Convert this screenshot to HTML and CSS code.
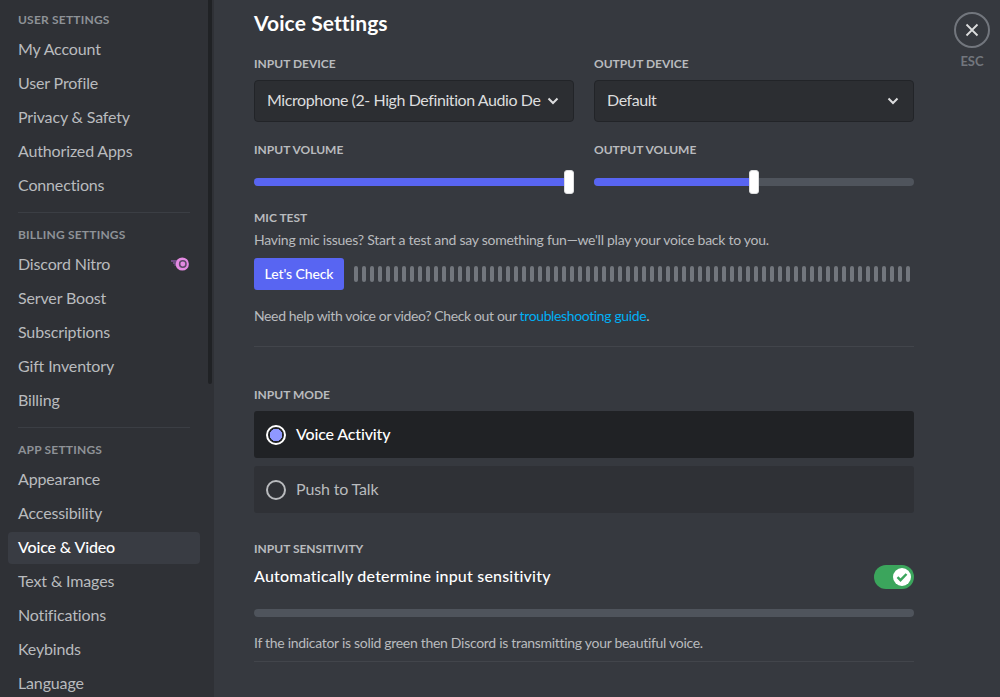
FILE: index.html
```html
<!DOCTYPE html>
<html lang="en">
<head>
    <meta charset="UTF-8">
    <title>Voice Settings</title>
    <link rel="stylesheet" href="styles.css">
</head>
<body>
<!--sidebar-->
<div class="sidebar">
    <div class="thumb"></div>
    <div class="navHead">User Settings</div>
    <div class="navItem">My Account</div>
    <div class="navItem">User Profile</div>
    <div class="navItem">Privacy &amp; Safety</div>
    <div class="navItem">Authorized Apps</div>
    <div class="navItem">Connections</div>
    <div class="navLine"></div>
    <div class="navHead">Billing Settings</div>
    <div class="navItem nitro">
        <span>Discord Nitro</span>
        <svg width="20" height="14" viewBox="0 0 20 14">
            <path fill="#b06ad0" d="M0 3.500h6v1H0zM2 5.500h4v1H2zM3.500 7.500h3v1h-3z"/>
            <circle cx="11.300" cy="7" r="6.600" fill="#e48ae2"/>
            <circle cx="11.800" cy="7" r="3.200" fill="#e48ae2" stroke="#5d4a68" stroke-width="1.500"/>
        </svg>
    </div>
    <div class="navItem">Server Boost</div>
    <div class="navItem">Subscriptions</div>
    <div class="navItem">Gift Inventory</div>
    <div class="navItem">Billing</div>
    <div class="navLine"></div>
    <div class="navHead">App Settings</div>
    <div class="navItem">Appearance</div>
    <div class="navItem">Accessibility</div>
    <div class="navItem active">Voice &amp; Video</div>
    <div class="navItem">Text &amp; Images</div>
    <div class="navItem">Notifications</div>
    <div class="navItem">Keybinds</div>
    <div class="navItem">Language</div>
</div>

<!--content-->
<div class="content">
    <h1 class="title">Voice Settings</h1>

    <div class="columns">
        <div class="column">
            <div class="label">Input Device</div>
            <div class="select">
                <span class="selectText">Microphone (2- High Definition Audio De</span>
                <svg class="chevron" width="12" height="8" viewBox="0 0 12 8"><path d="M1.500 1.500L6 6l4.500-4.500" fill="none" stroke="#dcddde" stroke-width="2"/></svg>
            </div>
        </div>
        <div class="column">
            <div class="label">Output Device</div>
            <div class="select">
                <span class="selectText">Default</span>
                <svg class="chevron" width="12" height="8" viewBox="0 0 12 8"><path d="M1.500 1.500L6 6l4.500-4.500" fill="none" stroke="#dcddde" stroke-width="2"/></svg>
            </div>
        </div>
    </div>

    <div class="columns volumes">
        <div class="column">
            <div class="label">Input Volume</div>
            <div class="slider">
                <div class="sliderFill" style="width: 100%"></div>
                <div class="sliderGrab" style="left: 100%"></div>
            </div>
        </div>
        <div class="column">
            <div class="label">Output Volume</div>
            <div class="slider">
                <div class="sliderFill" style="width: 50%"></div>
                <div class="sliderGrab" style="left: calc(50% + 5px)"></div>
            </div>
        </div>
    </div>

    <div class="label micLabel">Mic Test</div>
    <div class="note">Having mic issues? Start a test and say something fun—we'll play your voice back to you.</div>
    <div class="micRow">
        <div class="checkButton">Let's Check</div>
        <div id="micBars" class="micBars"></div>
    </div>
    <div class="note helpNote">Need help with voice or video? Check out our <a class="link">troubleshooting guide</a>.</div>
    <div class="line helpLine"></div>

    <div class="label modeLabel">Input Mode</div>
    <div class="radio selected">
        <span class="radioMark"></span>
        <span class="radioText">Voice Activity</span>
    </div>
    <div class="radio">
        <span class="radioMark"></span>
        <span class="radioText">Push to Talk</span>
    </div>

    <div class="label sensLabel">Input Sensitivity</div>
    <div class="sensRow">
        <span class="sensText">Automatically determine input sensitivity</span>
        <div class="toggle">
            <svg width="20" height="20" viewBox="0 0 20 20">
                <circle cx="10" cy="10" r="9" fill="#fff"/>
                <path d="M5.500 10.200l3 3 6-6.200" fill="none" stroke="#3ba55c" stroke-width="2.400"/>
            </svg>
        </div>
    </div>
    <div class="sensBar"></div>
    <div class="note sensNote">If the indicator is solid green then Discord is transmitting your beautiful voice.</div>
    <div class="line sensLine"></div>
</div>

<!--close-->
<div class="closeBox">
    <div class="closeCircle">
        <svg width="18" height="18" viewBox="0 0 18 18"><path d="M3.500 3.500l11 11M14.500 3.500l-11 11" fill="none" stroke="#dcddde" stroke-width="1.800"/></svg>
    </div>
    <span>ESC</span>
</div>

<script>
    // mic test bars
    let micBars = document.getElementById('micBars');
    for (let i = 0; i < 70; i++) {
        micBars.appendChild(document.createElement('i'));
    }
</script>
</body>
</html>
```

FILE: styles.css
```css
* {
    margin: 0;
    padding: 0;
    box-sizing: border-box;
}

html, body {
    height: 100%;
    overflow: hidden;
}

body {
    display: flex;
    background-color: #36393f;
    font-family: "Lato", "Noto Sans", sans-serif;
    font-size: 16px;
    color: #dcddde;
}

.sidebar {
    position: relative;
    flex: 0 0 214px;
    height: 697px;
    overflow: hidden;
    padding: 12px 14px 0 8px;
    background-color: #2f3136;
}

.thumb {
    position: absolute;
    top: 0;
    left: 208px;
    width: 4px;
    height: 384px;
    border-radius: 0 0 2px 2px;
    background-color: #202225;
}

.navHead {
    height: 22px;
    padding-left: 10px;
    font-size: 12px;
    line-height: 16px;
    font-weight: 700;
    letter-spacing: 0.2px;
    text-transform: uppercase;
    color: #8e9297;
}

.navItem {
    display: flex;
    align-items: center;
    justify-content: space-between;
    height: 32px;
    margin-bottom: 2px;
    padding: 0 10px 3px;
    border-radius: 4px;
    font-size: 16px;
    letter-spacing: -0.15px;
    color: #b9bbbe;
}

.nitro svg {
    margin-right: -1px;
}

.active {
    background-color: #393c43;
    color: #fff;
    font-weight: 500;
}

.navLine {
    height: 1px;
    margin: 10px 10px 14px;
    background-color: #3b3e44;
}

.content {
    flex: 0 0 660px;
    margin-left: 40px;
    padding-top: 11px;
}

.title {
    height: 25px;
    font-size: 21px;
    line-height: 24px;
    font-weight: 700;
    letter-spacing: 0.1px;
    color: #fff;
}

.columns {
    display: flex;
    gap: 20px;
}

.column {
    flex: 1 1 0;
    min-width: 0;
}

.label {
    height: 16px;
    font-size: 12px;
    line-height: 18px;
    font-weight: 700;
    text-transform: uppercase;
    color: #b9bbbe;
}

.columns > .column > .label {
    margin-top: 19px;
}

.select {
    display: flex;
    align-items: center;
    height: 42px;
    margin-top: 9px;
    padding: 0 14px 0 12px;
    border: 1px solid #222428;
    border-radius: 4px;
    background-color: #2c2e32;
    font-size: 16px;
    letter-spacing: -0.42px;
    color: #dcddde;
}

.selectText {
    flex-grow: 1;
    overflow: hidden;
    padding-bottom: 4px;
    white-space: nowrap;
}

.chevron {
    flex: none;
    margin-left: 6px;
}

.volumes .column > .label {
    margin-top: 19px;
}

.slider {
    position: relative;
    height: 8px;
    margin-top: 21px;
    border-radius: 4px;
    background-color: #4f545c;
}

.sliderFill {
    height: 100%;
    border-radius: 4px;
    background-color: #5865f2;
}

.sliderGrab {
    position: absolute;
    top: -8px;
    width: 10px;
    height: 24px;
    margin-left: -10px;
    border: 1px solid #dcddde;
    border-radius: 3px;
    background-color: #fff;
}

.micLabel {
    margin-top: 23px;
}

.note {
    font-size: 14px;
    line-height: 20px;
    letter-spacing: -0.26px;
    color: #b9bbbe;
}

.micLabel + .note {
    margin-top: 5px;
}

.micRow {
    display: flex;
    align-items: center;
    margin-top: 8px;
}

.checkButton {
    width: 90px;
    height: 32px;
    border-radius: 3px;
    background-color: #5865f2;
    text-align: center;
    font-size: 14px;
    line-height: 32px;
    font-weight: 500;
    letter-spacing: -0.1px;
    color: #fff;
}

.micBars {
    display: flex;
    gap: 4px;
    margin-left: 10px;
}

.micBars > i {
    width: 4px;
    height: 16px;
    border-radius: 2px;
    background-color: #72767d;
}

.helpNote {
    margin-top: 16px;
    letter-spacing: -0.37px;
}

.link {
    color: #00aff4;
}

.line {
    height: 1px;
    background-color: #42454b;
}

.helpLine {
    margin-top: 20px;
}

.modeLabel {
    margin-top: 39px;
    margin-bottom: 9px;
}

.radio {
    display: flex;
    align-items: center;
    gap: 10px;
    height: 47px;
    margin-bottom: 8px;
    padding: 0 12px;
    border-radius: 3px;
    background-color: #2f3136;
    font-size: 16px;
    letter-spacing: -0.15px;
    color: #b9bbbe;
}

.radioText {
    padding-bottom: 2px;
}

.radioMark {
    width: 20px;
    height: 20px;
    border: 2px solid #b9bbbe;
    border-radius: 50%;
}

.selected {
    background-color: #202225;
    color: #fff;
    font-weight: 500;
}

.selected .radioMark {
    border-color: #fff;
    background: radial-gradient(circle, #8f98ff 6px, transparent 6.500px);
}

.sensLabel {
    margin-top: 27px;
}

.sensRow {
    display: flex;
    align-items: center;
    justify-content: space-between;
    height: 24px;
    margin-top: 9px;
    font-size: 16px;
    font-weight: 500;
    letter-spacing: 0.2px;
    color: #fff;
}

.sensText {
    padding-bottom: 4px;
}

.toggle {
    display: flex;
    align-items: center;
    justify-content: flex-end;
    width: 40px;
    height: 24px;
    padding-right: 2px;
    border-radius: 12px;
    background-color: #3ba55c;
}

.sensBar {
    height: 8px;
    margin-top: 20px;
    border-radius: 4px;
    background-color: #4f545c;
}

.note.sensNote {
    margin-top: 16px;
    letter-spacing: -0.3px;
}

.sensLine {
    margin-top: 8px;
}

.closeBox {
    display: flex;
    flex-direction: column;
    align-items: center;
    flex: 0 0 36px;
    margin-left: 40px;
    padding-top: 12px;
    font-size: 13px;
    font-weight: 700;
    color: #72767d;
}

.closeCircle {
    display: flex;
    align-items: center;
    justify-content: center;
    width: 36px;
    height: 36px;
    margin-bottom: 5px;
    border: 2px solid #72767d;
    border-radius: 50%;
}
```
